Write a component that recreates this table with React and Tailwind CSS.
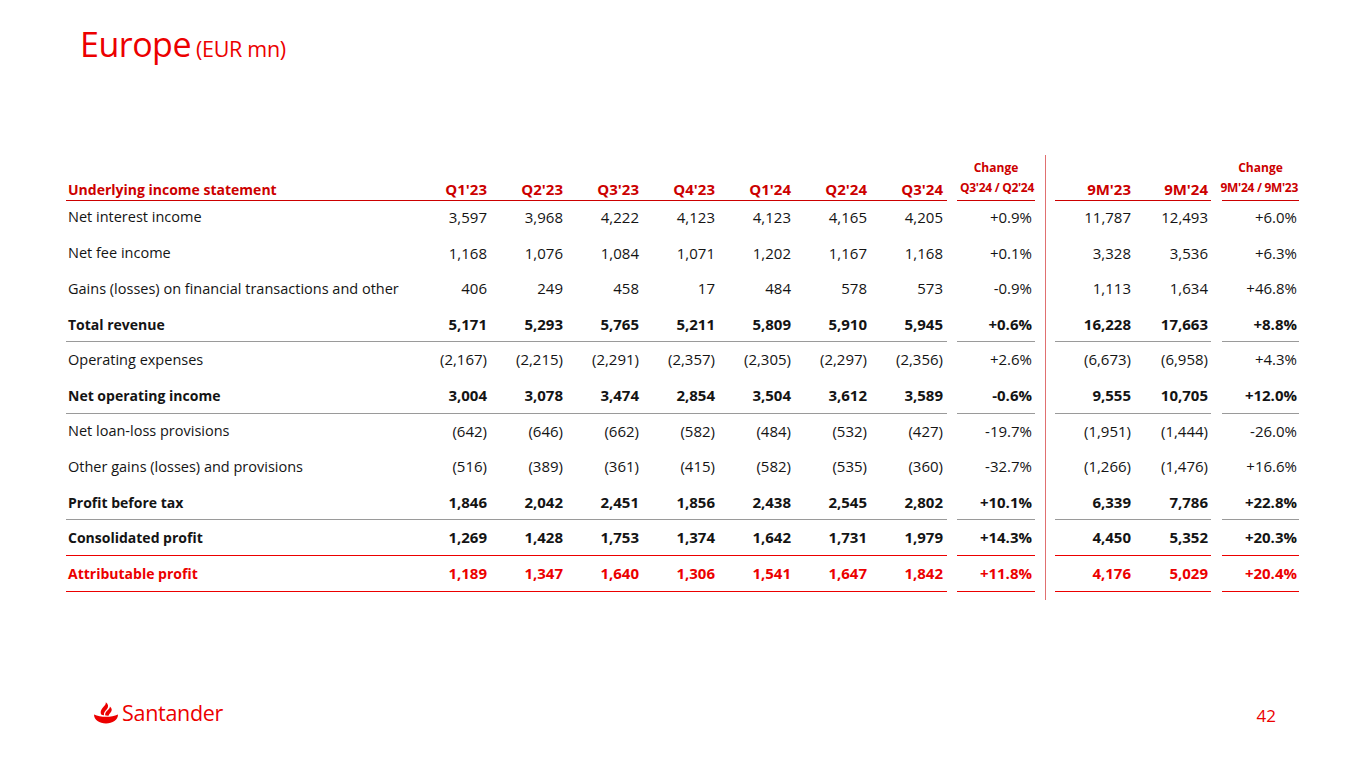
import React from "react";

const rows = [
  { label: "Net interest income", q: ["3,597", "3,968", "4,222", "4,123", "4,123", "4,165", "4,205"], ch: "+0.9%", m: ["11,787", "12,493"], ch2: "+6.0%" },
  { label: "Net fee income", q: ["1,168", "1,076", "1,084", "1,071", "1,202", "1,167", "1,168"], ch: "+0.1%", m: ["3,328", "3,536"], ch2: "+6.3%" },
  { label: "Gains (losses) on financial transactions and other", q: ["406", "249", "458", "17", "484", "578", "573"], ch: "-0.9%", m: ["1,113", "1,634"], ch2: "+46.8%" },
  { label: "Total revenue", q: ["5,171", "5,293", "5,765", "5,211", "5,809", "5,910", "5,945"], ch: "+0.6%", m: ["16,228", "17,663"], ch2: "+8.8%", bold: true, line: "gray" },
  { label: "Operating expenses", q: ["(2,167)", "(2,215)", "(2,291)", "(2,357)", "(2,305)", "(2,297)", "(2,356)"], ch: "+2.6%", m: ["(6,673)", "(6,958)"], ch2: "+4.3%" },
  { label: "Net operating income", q: ["3,004", "3,078", "3,474", "2,854", "3,504", "3,612", "3,589"], ch: "-0.6%", m: ["9,555", "10,705"], ch2: "+12.0%", bold: true, line: "gray" },
  { label: "Net loan-loss provisions", q: ["(642)", "(646)", "(662)", "(582)", "(484)", "(532)", "(427)"], ch: "-19.7%", m: ["(1,951)", "(1,444)"], ch2: "-26.0%" },
  { label: "Other gains (losses) and provisions", q: ["(516)", "(389)", "(361)", "(415)", "(582)", "(535)", "(360)"], ch: "-32.7%", m: ["(1,266)", "(1,476)"], ch2: "+16.6%" },
  { label: "Profit before tax", q: ["1,846", "2,042", "2,451", "1,856", "2,438", "2,545", "2,802"], ch: "+10.1%", m: ["6,339", "7,786"], ch2: "+22.8%", bold: true, line: "gray" },
  { label: "Consolidated profit", q: ["1,269", "1,428", "1,753", "1,374", "1,642", "1,731", "1,979"], ch: "+14.3%", m: ["4,450", "5,352"], ch2: "+20.3%", bold: true, line: "red" },
  { label: "Attributable profit", q: ["1,189", "1,347", "1,640", "1,306", "1,541", "1,647", "1,842"], ch: "+11.8%", m: ["4,176", "5,029"], ch2: "+20.4%", bold: true, red: true, line: "red" },
];

const quarters = ["Q1'23", "Q2'23", "Q3'23", "Q4'23", "Q1'24", "Q2'24", "Q3'24"];

function lineClass(line) {
  if (line === "gray") return "border-b border-[#9a9a9a]";
  if (line === "red") return "border-b border-[#ec0000]";
  return "border-b border-transparent";
}

function Flame() {
  return (
    <svg width="26" height="22" viewBox="0 0 26 22">
      <path d="M1 12.5 C4.5 14 8.5 14.8 13 14.8 C17.5 14.8 21.5 14 25 12.5 C25 17.8 19.5 21.5 13 21.5 C6.5 21.5 1 17.8 1 12.5 Z" fill="#ec0000" />
      <path d="M8.2 12.4 C6.8 9.6 8.6 6.8 11 4.2 C12.4 2.7 13 1.4 12.8 0.2 C15.4 2.2 15.8 4.6 14 7 C12.2 9.4 10.4 10.6 11 13.3 C10 13.1 9 12.8 8.2 12.4 Z" fill="#ec0000" />
      <path d="M12.4 13.5 C11.6 10.8 13.6 9.2 15.4 7.4 C16.4 6.4 17 5.4 16.9 4.4 C19.2 6.2 19.3 8.6 17.6 10.4 C16.4 11.7 15.6 12.6 16 13.6 C14.8 13.7 13.6 13.7 12.4 13.5 Z" fill="#ec0000" />
    </svg>
  );
}

export default function App() {
  const font = { fontFamily: "'Open Sans', 'Noto Sans', sans-serif" };
  return (
    <div className="w-[1365px] h-[768px] bg-white flex flex-col" style={font}>
      {/* Title */}
      <div className="pl-[80px] pt-[27px] h-[58px] text-[#ec0000] leading-none flex items-baseline gap-[5px]">
        <span className="text-[34px] tracking-[-0.5px]">Europe</span>
        <span className="text-[21.5px] tracking-[-0.3px]">(EUR mn)</span>
      </div>

      {/* Table */}
      <div className="mt-[97px] ml-[66px] flex items-stretch text-[15px] text-[#141414]">
        {/* Left block */}
        <div className="flex flex-col pb-[8px]">
          <div className="flex h-[22px]">
            <div className="w-[881px]" />
            <div className="ml-[10px] w-[78px] text-center text-[12px] font-bold text-[#cc0000] pt-[7px] leading-none">Change</div>
          </div>
          <div className="flex h-[23px]">
            <div className="w-[881px] flex items-end border-b border-[#cc0000] font-bold text-[#cc0000] translate-y-[1px]">
              <div className="w-[349px] pl-[2px] text-[14px]">Underlying income statement</div>
              {quarters.map((q) => (
                <div key={q} className="w-[76px] text-right pr-[4px]">{q}</div>
              ))}
            </div>
            <div className="ml-[10px] w-[78px] flex items-end justify-end border-b border-[#cc0000] font-bold text-[#cc0000] text-[12px] pb-[3px] pr-[1px] tracking-[-0.3px] translate-y-[1px]">
              Q3'24 / Q2'24
            </div>
          </div>
          {rows.map((r) => {
            const tc = r.red ? "text-[#ec0000]" : "";
            const fw = r.bold ? "font-bold" : "";
            return (
              <div key={r.label} className={`flex h-[35.6px] ${tc} ${fw}`}>
                <div className={`w-[881px] flex items-center ${lineClass(r.line)}`}>
                  <div className={`w-[349px] pl-[2px] whitespace-nowrap ${r.bold ? "text-[14px]" : "text-[14.5px]"}`}>{r.label}</div>
                  {r.q.map((v, i) => (
                    <div key={i} className="w-[76px] text-right pr-[4px]">{v}</div>
                  ))}
                </div>
                <div className={`ml-[10px] w-[78px] flex items-center justify-end pr-[3px] ${lineClass(r.line)}`}>{r.ch}</div>
              </div>
            );
          })}
        </div>

        {/* Divider */}
        <div className="ml-[10px] w-px bg-[#e07070]" />

        {/* Right block */}
        <div className="ml-[9px] flex flex-col pb-[8px]">
          <div className="flex h-[22px]">
            <div className="w-[156px]" />
            <div className="ml-[11px] w-[77px] text-center text-[12px] font-bold text-[#cc0000] pt-[7px] leading-none">Change</div>
          </div>
          <div className="flex h-[23px]">
            <div className="w-[156px] flex items-end border-b border-[#cc0000] font-bold text-[#cc0000] translate-y-[1px]">
              <div className="w-[78px] text-right pr-[2px]">9M'23</div>
              <div className="w-[78px] text-right pr-[3px]">9M'24</div>
            </div>
            <div className="ml-[11px] w-[77px] flex items-end justify-end border-b border-[#cc0000] font-bold text-[#cc0000] text-[12px] pb-[3px] pr-[1px] tracking-[-0.3px] whitespace-nowrap translate-y-[1px]">
              9M'24 / 9M'23
            </div>
          </div>
          {rows.map((r) => {
            const tc = r.red ? "text-[#ec0000]" : "";
            const fw = r.bold ? "font-bold" : "";
            return (
              <div key={r.label} className={`flex h-[35.6px] ${tc} ${fw}`}>
                <div className={`w-[156px] flex items-center ${lineClass(r.line)}`}>
                  <div className="w-[78px] text-right pr-[2px]">{r.m[0]}</div>
                  <div className="w-[78px] text-right pr-[3px]">{r.m[1]}</div>
                </div>
                <div className={`ml-[11px] w-[77px] flex items-center justify-end pr-[2px] ${lineClass(r.line)}`}>{r.ch2}</div>
              </div>
            );
          })}
        </div>
      </div>

      {/* Footer */}
      <div className="mt-auto mb-[44px] flex items-center justify-between pl-[93px] pr-[89px]">
        <div className="flex items-center gap-[3px]">
          <Flame />
          <span className="text-[#ec0000] text-[21.5px] leading-none tracking-[-0.3px]">Santander</span>
        </div>
        <span className="text-[#ec0000] text-[17px] leading-none mt-[4px]">42</span>
      </div>
    </div>
  );
}
